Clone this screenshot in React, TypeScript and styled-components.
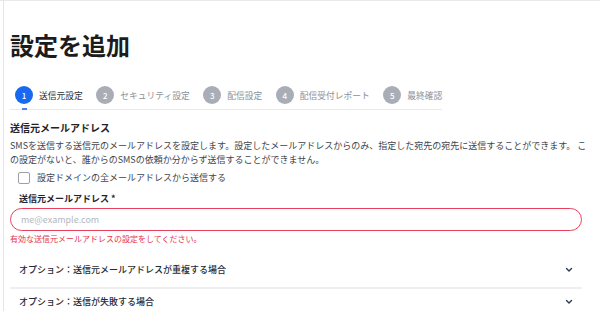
import styled, { createGlobalStyle } from "styled-components"

const GlobalStyle = createGlobalStyle`
  body {
    margin: 0;
    background: #fff;
    font-family: "Noto Sans CJK JP", "Noto Sans", sans-serif;
  }
`

const Page = styled.div`
  width: 600px;
  height: 311px;
  overflow: hidden;
  border-top: 1px solid #e9e9e9;
  box-sizing: border-box;
`

const Frame = styled.div`
  margin-left: 3px;
  height: 100%;
  border-left: 1px solid #e6e6e6;
  padding: 32px 18px 0 6px;
  box-sizing: border-box;
`

const Title = styled.h1`
  margin: 0;
  font-size: 24px;
  line-height: 24px;
  font-weight: 700;
  color: #1c1c1c;
`

const Stepper = styled.div`
  display: flex;
  width: fit-content;
  gap: 13.5px;
  margin-top: 29px;
  padding: 0 0 5px 5px;
  border-bottom: 1px solid #e8e9ee;
`

const Step = styled.div<{ $active?: boolean }>`
  position: relative;
  display: flex;
  align-items: center;
  gap: 6px;
  height: 18px;
  font-size: 8.75px;
  color: ${(p) => (p.$active ? "#2b2f36" : "#8b9099")};

  ${(p) =>
    p.$active &&
    `
    &::after {
      content: "";
      position: absolute;
      left: 7px;
      bottom: -6px;
      width: 5px;
      height: 2px;
      background: #4f7ff0;
    }
  `}
`

const StepNum = styled.span<{ $active?: boolean }>`
  width: 18px;
  height: 18px;
  border-radius: 50%;
  display: flex;
  align-items: center;
  justify-content: center;
  background: ${(p) => (p.$active ? "#1769f0" : "#a9adb6")};
  color: #fff;
  font-size: 8px;
  font-weight: 500;
`

const Heading = styled.h2`
  margin: 10px 0 0;
  font-size: 10px;
  line-height: 15px;
  font-weight: 700;
  color: #1f2228;
`

const Desc = styled.p`
  margin: 4px -8px 0 0;
  font-size: 9px;
  line-height: 14px;
  color: #41454c;
`

const CheckRow = styled.label`
  display: flex;
  align-items: center;
  gap: 7px;
  margin-top: 4px;
  padding-left: 8px;
  height: 13px;
  font-size: 9px;
  color: #41454c;
`

const Box = styled.span`
  width: 10px;
  height: 10px;
  border: 1px solid #9aa0a8;
  border-radius: 2px;
  background: #fff;
`

const FieldLabel = styled.div`
  margin-top: 8px;
  padding-left: 9px;
  font-size: 9px;
  line-height: 14px;
  font-weight: 700;
  color: #1e2433;
`

const Input = styled.input`
  display: block;
  width: 100%;
  height: 23px;
  margin-top: 2px;
  padding: 0 10px;
  box-sizing: border-box;
  border: 1.5px solid #e9405e;
  border-radius: 12px;
  outline: none;
  font-family: inherit;
  font-size: 9px;
  color: #333;

  &::placeholder {
    color: #b3b7bd;
  }
`

const ErrorText = styled.div`
  margin-top: 2px;
  font-size: 8px;
  line-height: 12px;
  color: #e5334f;
`

const Accordion = styled.div`
  margin-top: 12px;
`

const AccRow = styled.div`
  display: flex;
  align-items: center;
  justify-content: space-between;
  padding: 6px 9px 10px 9px;
  border-bottom: 2px solid #efeff1;
  font-size: 9px;
  line-height: 14px;
  font-weight: 500;
  color: #272b35;
`

const Chevron = () => (
  <svg width="8" height="6" viewBox="0 0 8 6">
    <polyline
      points="1.5,1.5 4,4 6.5,1.5"
      fill="none"
      stroke="#2b3a55"
      strokeWidth="1.4"
      strokeLinecap="round"
      strokeLinejoin="round"
    />
  </svg>
)

const steps = ["送信元設定", "セキュリティ設定", "配信設定", "配信受付レポート", "最終確認"]

export default function App() {
  return (
    <>
      <GlobalStyle />
      <Page>
        <Frame>
          <Title>設定を追加</Title>
          <Stepper>
            {steps.map((s, i) => (
              <Step key={s} $active={i === 0}>
                <StepNum $active={i === 0}>{i + 1}</StepNum>
                {s}
              </Step>
            ))}
          </Stepper>
          <Heading>送信元メールアドレス</Heading>
          <Desc>
            SMSを送信する送信元のメールアドレスを設定します。設定したメールアドレスからのみ、指定した宛先の宛先に送信することができます。 この設定がないと、誰からのSMSの依頼か分からず送信することができません。
          </Desc>
          <CheckRow>
            <Box />
            設定ドメインの全メールアドレスから送信する
          </CheckRow>
          <FieldLabel>送信元メールアドレス *</FieldLabel>
          <Input placeholder="me@example.com" />
          <ErrorText>有効な送信元メールアドレスの設定をしてください。</ErrorText>
          <Accordion>
            <AccRow>
              オプション：送信元メールアドレスが重複する場合
              <Chevron />
            </AccRow>
            <AccRow>
              オプション：送信が失敗する場合
              <Chevron />
            </AccRow>
          </Accordion>
        </Frame>
      </Page>
    </>
  )
}
